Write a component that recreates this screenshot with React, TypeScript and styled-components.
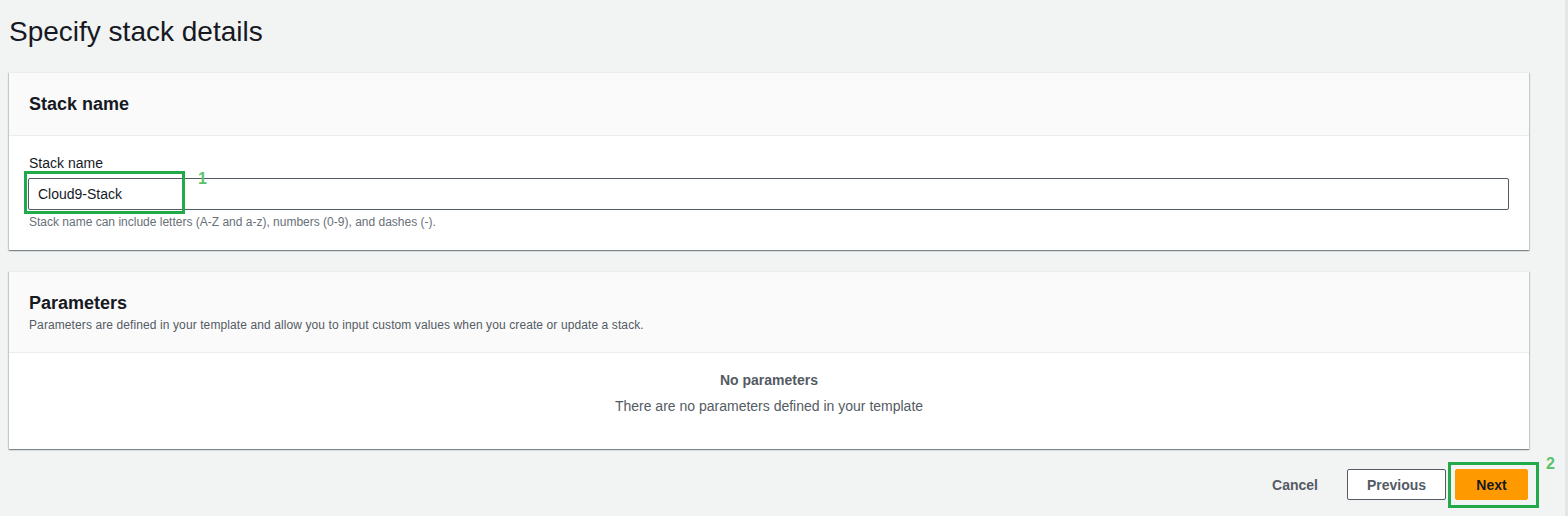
import styled, { createGlobalStyle } from "styled-components"

const Global = createGlobalStyle`
    html, body {
        margin: 0;
        padding: 0;
        background: #f2f3f3;
        font-family: "Liberation Sans", Arial, sans-serif;
        color: #16191f;
    }
`

export default function App() {
    return (
        <Page>
            <Global />
            <Title>Specify stack details</Title>

            <Card>
                <CardHeader>
                    <h2>Stack name</h2>
                </CardHeader>
                <CardBody>
                    <Label>Stack name</Label>
                    <Field>
                        <Input defaultValue="Cloud9-Stack" />
                        <Marker style={{ left: -4, top: -7, width: 161, height: 43 }} />
                        <Step style={{ left: 170, top: -8 }}>1</Step>
                    </Field>
                    <Hint>Stack name can include letters (A-Z and a-z), numbers (0-9), and dashes (-).</Hint>
                </CardBody>
            </Card>

            <Card>
                <CardHeader $tall>
                    <h2>Parameters</h2>
                    <p>Parameters are defined in your template and allow you to input custom values when you create or update a stack.</p>
                </CardHeader>
                <Empty>
                    <strong>No parameters</strong>
                    <span>There are no parameters defined in your template</span>
                </Empty>
            </Card>

            <Actions>
                <LinkButton>Cancel</LinkButton>
                <Button>Previous</Button>
                <NextWrap>
                    <Button $primary>Next</Button>
                    <Marker style={{ left: -7, top: -7, width: 91, height: 46 }} />
                    <Step style={{ left: 91, top: -14 }}>2</Step>
                </NextWrap>
            </Actions>
            <Scroll />
        </Page>
    )
}

const Page = styled.div`
    position: relative;
    height: 516px;
    padding: 0 39px 0 9px;
    box-sizing: border-box;
    overflow: hidden;
`

const Title = styled.h1`
    margin: 0;
    padding: 15px 0 0;
    height: 72px;
    box-sizing: border-box;
    font-size: 28px;
    font-weight: 400;
    line-height: 34px;
    color: #16191f;
`

const Card = styled.section`
    background: #fff;
    border-top: 1px solid #eaeded;
    box-shadow: 0 1px 1px 0 rgba(0, 28, 36, 0.3), 1px 1px 1px 0 rgba(0, 28, 36, 0.15),
        -1px 1px 1px 0 rgba(0, 28, 36, 0.15);
    margin-bottom: 21px;
`

const CardHeader = styled.div<{ $tall?: boolean }>`
    background: #fafafa;
    border-bottom: 1px solid #eaeded;
    padding: ${(p) => (p.$tall ? "19px 20px 20px" : "19px 20px")};
    height: ${(p) => (p.$tall ? "81px" : "63px")};
    box-sizing: border-box;
    h2 {
        margin: 0;
        font-size: 18px;
        font-weight: 700;
        line-height: 24px;
    }
    p {
        margin: 2px 0 0;
        font-size: 12px;
        line-height: 16px;
        color: #545b64;
        letter-spacing: 0.1px;
    }
`

const CardBody = styled.div`
    padding: 18px 20px 20px 20px;
    height: 114px;
    box-sizing: border-box;
`

const Label = styled.div`
    font-size: 14px;
    line-height: 18px;
    color: #16191f;
`

const Field = styled.div`
    position: relative;
    margin-top: 6px;
    margin-left: -1px;
`

const Input = styled.input`
    display: block;
    width: 100%;
    height: 32px;
    box-sizing: border-box;
    border: 1px solid #545b64;
    border-radius: 2px;
    padding: 0 9px;
    font-family: inherit;
    font-size: 14px;
    color: #16191f;
    background: #fff;
    outline: none;
`

const Hint = styled.div`
    margin-top: 4px;
    font-size: 12px;
    line-height: 16px;
    color: #687078;
`

const Empty = styled.div`
    height: 96px;
    display: flex;
    flex-direction: column;
    align-items: center;
    padding-top: 18px;
    box-sizing: border-box;
    font-size: 14px;
    line-height: 18px;
    color: #545b64;
    strong {
        font-weight: 700;
        margin-bottom: 8px;
    }
`

const Actions = styled.div`
    display: flex;
    justify-content: flex-end;
    align-items: center;
    gap: 9px;
    margin-top: -1px;
    padding-right: 1px;
`

const LinkButton = styled.button`
    border: none;
    background: none;
    font-family: inherit;
    font-size: 14px;
    font-weight: 700;
    color: #545b64;
    padding: 0 20px;
    height: 31px;
    margin-right: 0;
`

const Button = styled.button<{ $primary?: boolean }>`
    height: 31px;
    box-sizing: border-box;
    border-radius: 2px;
    padding: 0 18px;
    font-family: inherit;
    font-size: 14px;
    font-weight: 700;
    border: 1px solid ${(p) => (p.$primary ? "#ff9900" : "#545b64")};
    background: ${(p) => (p.$primary ? "#ff9900" : "#fff")};
    color: ${(p) => (p.$primary ? "#16191f" : "#545b64")};
    width: ${(p) => (p.$primary ? "73px" : "99px")};
`

const NextWrap = styled.div`
    position: relative;
    display: flex;
`

const Marker = styled.div`
    position: absolute;
    border: 3px solid #22a94a;
    box-sizing: border-box;
    pointer-events: none;
`

const Step = styled.span`
    position: absolute;
    font-size: 16px;
    font-weight: 700;
    color: #5cc26c;
`

const Scroll = styled.div`
    position: absolute;
    top: 0;
    right: 0;
    width: 3px;
    height: 100%;
    background: #e4e6e6;
`
